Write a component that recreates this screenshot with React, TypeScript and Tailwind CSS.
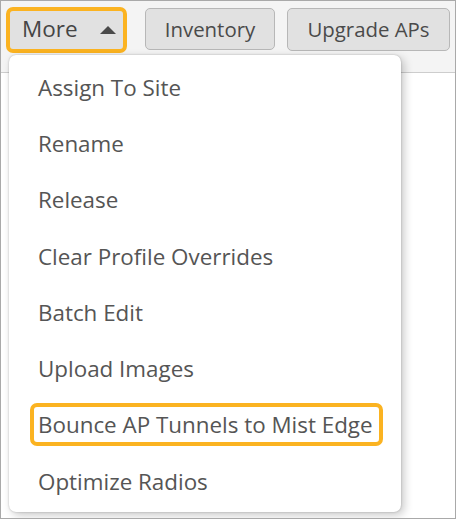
import React from "react";

const items = [
  "Assign To Site",
  "Rename",
  "Release",
  "Clear Profile Overrides",
  "Batch Edit",
  "Upload Images",
  "Bounce AP Tunnels to Mist Edge",
  "Optimize Radios",
];

const HIGHLIGHT = "Bounce AP Tunnels to Mist Edge";

export default function App() {
  return (
    <div
      className="
        relative
        w-[456px]
        h-[519px]
        overflow-hidden
        border
        border-[#a9a9a9]
        bg-white
        font-['Open_Sans',sans-serif]
      "
    >
      {/* TOOLBAR */}
      <div
        className="
          flex
          items-start
          h-[72px]
          pl-[5px]
          pt-[6px]
          bg-[#f4f4f4]
          border-b
          border-[#cdcdcd]
        "
      >
        <button
          className="
            flex
            items-center
            w-[121px]
            h-[46px]
            pl-[12px]
            rounded-[7px]
            border-[4px]
            border-[#fbb321]
            bg-[#e1e1e1]
            text-[22.5px]
            text-[#454545]
          "
        >
          <span className="leading-none -mt-[2px]">More</span>
          <svg
            width="16"
            height="8"
            viewBox="0 0 16 8"
            className="ml-[22px]"
          >
            <polygon points="8,0 16,8 0,8" fill="#4a4a4a" />
          </svg>
        </button>

        <button
          className="
            ml-[18px]
            mt-[1px]
            w-[130px]
            h-[42px]
            rounded-[5px]
            border
            border-[#b7b7b7]
            bg-[#e1e1e1]
            text-[20.4px]
            text-[#4a4a4a]
          "
        >
          Inventory
        </button>

        <button
          className="
            ml-[12px]
            mt-[1px]
            w-[163px]
            h-[43px]
            rounded-[5px]
            border
            border-[#b7b7b7]
            bg-[#e1e1e1]
            text-[20.4px]
            text-[#4a4a4a]
          "
        >
          Upgrade APs
        </button>
      </div>

      {/* DROPDOWN MENU */}
      <div
        className="
          absolute
          left-[8px]
          top-[54px]
          w-[392px]
          h-[457px]
          pt-[4px]
          rounded-[7px]
          bg-white
          shadow-[3px_3px_10px_rgba(0,0,0,0.22),0_0_2px_rgba(0,0,0,0.25)]
        "
      >
        {items.map((item) => (
          <div
            key={item}
            className="flex items-center h-[56.3px] pl-[21px]"
          >
            <span
              className={
                item === HIGHLIGHT
                  ? "pl-[4px] pr-[6px] py-[2px] rounded-[7px] border-[4px] border-[#fbb321] text-[22.4px] leading-[31px] text-[#555555]"
                  : "pl-[4px] pr-[6px] py-[2px] rounded-[7px] border-[4px] border-transparent text-[22.4px] leading-[31px] text-[#555555]"
              }
            >
              {item}
            </span>
          </div>
        ))}
      </div>
    </div>
  );
}
